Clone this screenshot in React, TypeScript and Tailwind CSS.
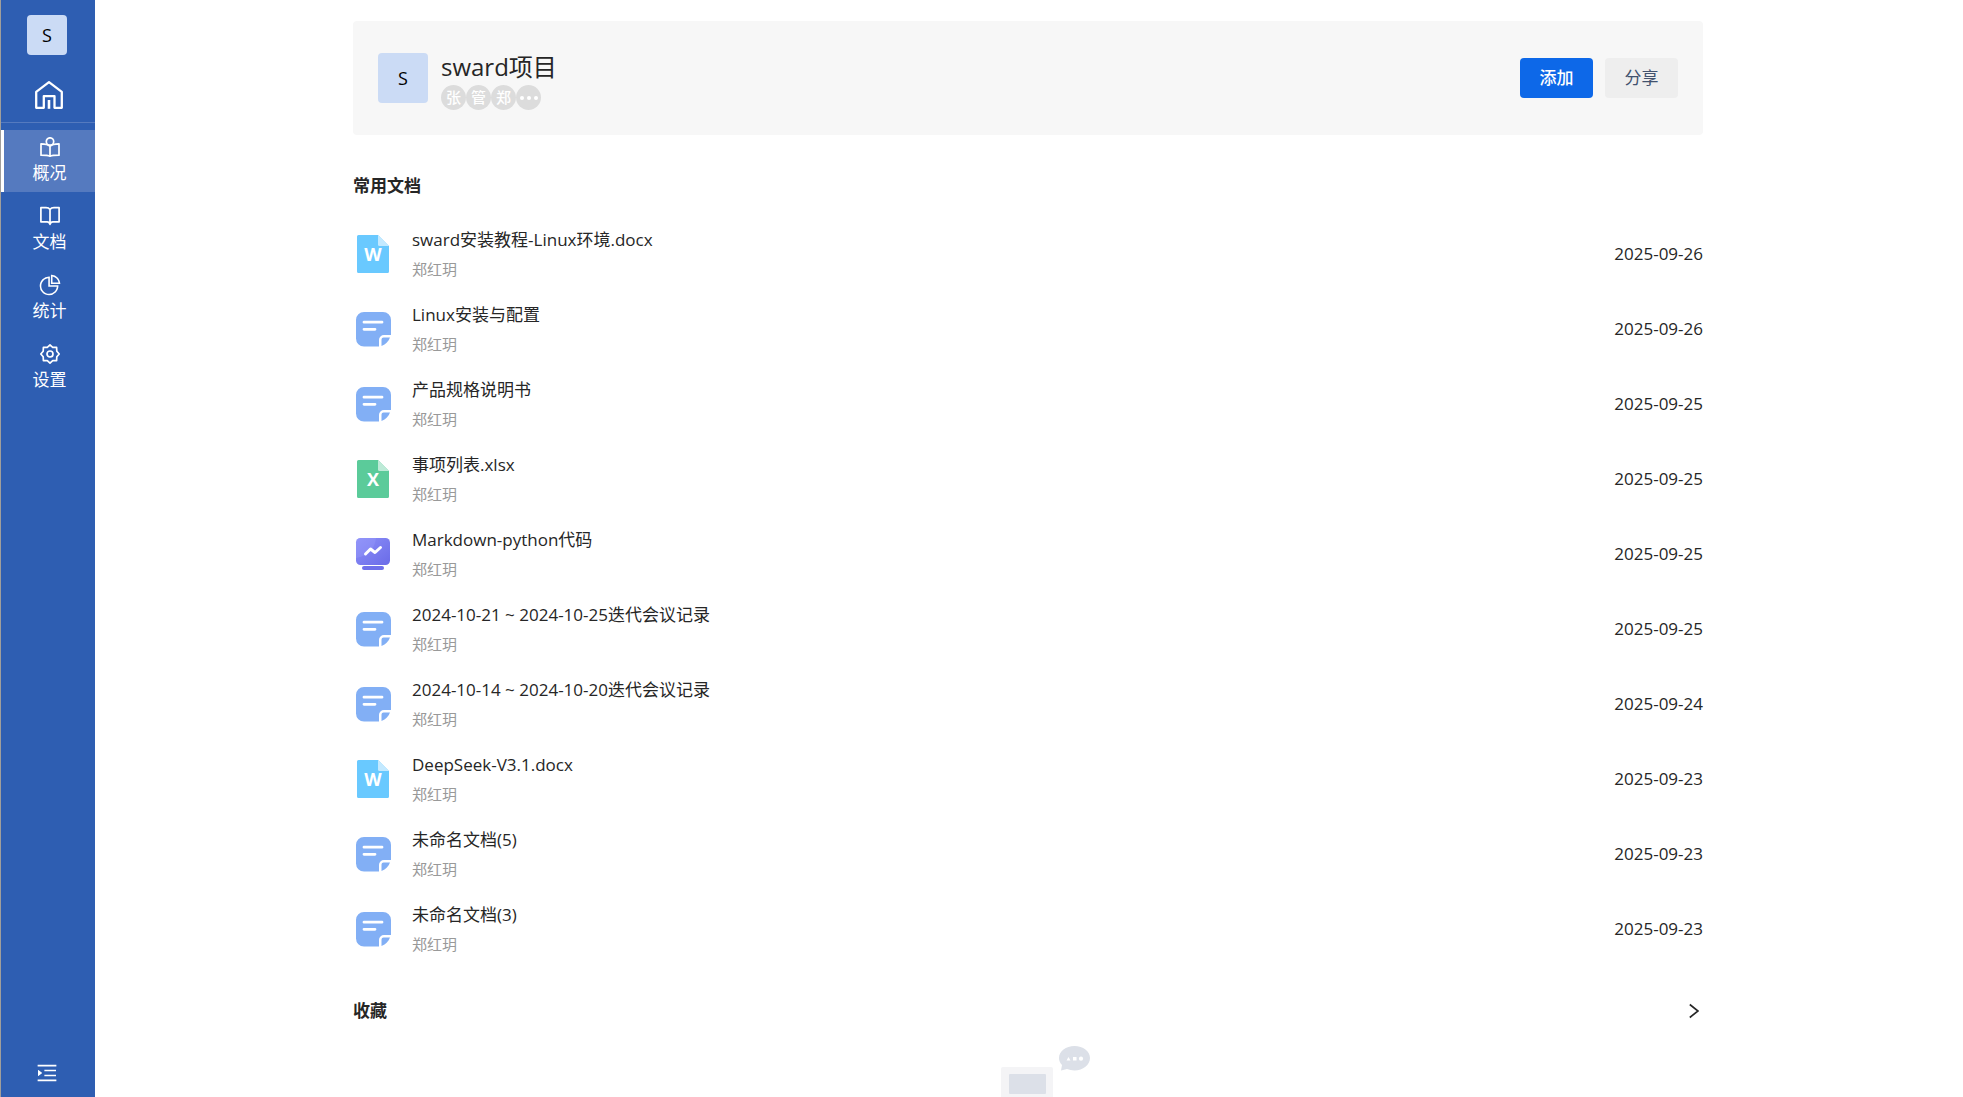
import type { ReactNode } from "react";
import { AiOutlinePieChart, AiOutlineMenuUnfold } from "react-icons/ai";

type DocKind = "word" | "excel" | "note" | "markdown";

const docs: { kind: DocKind; title: string; owner: string; date: string }[] = [
  { kind: "word", title: "sward安装教程-Linux环境.docx", owner: "郑红玥", date: "2025-09-26" },
  { kind: "note", title: "Linux安装与配置", owner: "郑红玥", date: "2025-09-26" },
  { kind: "note", title: "产品规格说明书", owner: "郑红玥", date: "2025-09-25" },
  { kind: "excel", title: "事项列表.xlsx", owner: "郑红玥", date: "2025-09-25" },
  { kind: "markdown", title: "Markdown-python代码", owner: "郑红玥", date: "2025-09-25" },
  { kind: "note", title: "2024-10-21 ~ 2024-10-25迭代会议记录", owner: "郑红玥", date: "2025-09-25" },
  { kind: "note", title: "2024-10-14 ~ 2024-10-20迭代会议记录", owner: "郑红玥", date: "2025-09-24" },
  { kind: "word", title: "DeepSeek-V3.1.docx", owner: "郑红玥", date: "2025-09-23" },
  { kind: "note", title: "未命名文档(5)", owner: "郑红玥", date: "2025-09-23" },
  { kind: "note", title: "未命名文档(3)", owner: "郑红玥", date: "2025-09-23" },
];

function HomeIcon() {
  return (
    <svg viewBox="0 0 28 28" className="size-7" fill="none" stroke="currentColor" strokeWidth="2.300" strokeLinejoin="round" aria-hidden="true">
      <path d="M1.200 26.800V10.800L14 1.200l12.800 9.600v16H19.500V15.200H8.800v11.600z" />
      <path d="M14 19v8.800" strokeWidth="2.600" />
    </svg>
  );
}

function OverviewIcon() {
  return (
    <svg viewBox="0 0 20 20" className="size-5" fill="none" stroke="currentColor" strokeWidth="1.700" strokeLinejoin="round" aria-hidden="true">
      <circle cx="10" cy="4.500" r="3.700" />
      <path d="M10 9.300C8.500 7.800 6.500 7 1 6.900v11.300c5 0 7.500.3 9 1.100 1.500-.8 4-1.100 9-1.100V6.900c-5.500.1-7.500.9-9 2.400zm0 0v10" />
    </svg>
  );
}

function BookIcon() {
  return (
    <svg viewBox="0 0 20 20" className="size-5" fill="none" stroke="currentColor" strokeWidth="1.700" strokeLinejoin="round" aria-hidden="true">
      <path d="M10 3.500C9 2 7.500 1.700 6 1.700H.9v14.100h6.300c1.500 0 2.300.7 2.800 2.600.5-1.900 1.300-2.600 2.800-2.600h6.300V1.700H14c-1.500 0-3 .3-4 1.800zm0 0v14.500" />
    </svg>
  );
}

function GearIcon() {
  return (
    <svg viewBox="0 0 20 20" className="size-5" fill="none" stroke="currentColor" strokeWidth="1.700" strokeLinejoin="round" aria-hidden="true">
      <path d="M10 .9l2.700 2.400h3.900l.2 3.900L19.200 10l-2.400 2.800-.2 3.900h-3.900L10 19.100l-2.700-2.400H3.400l-.2-3.900L.8 10l2.400-2.800.2-3.900h3.900z" />
      <circle cx="10" cy="10" r="3" />
    </svg>
  );
}

function SheetIcon({ letter, body, fold }: { letter: string; body: string; fold: string }) {
  return (
    <svg viewBox="0 0 40 40" className="size-10" aria-hidden="true">
      <path d="M5.500 1H25l11 11v25.500A1.500 1.500 0 0 1 34.500 39h-29A1.500 1.500 0 0 1 4 37.500v-35A1.500 1.500 0 0 1 5.500 1z" fill={body} />
      <path d="M25 1l11 11H26.500a1.500 1.500 0 0 1-1.500-1.500z" fill={fold} />
      <text x="20" y="27" textAnchor="middle" fontSize="18" fontWeight="700" fill="#fff">
        {letter}
      </text>
    </svg>
  );
}

function NoteIcon() {
  return (
    <svg viewBox="0 0 40 40" className="size-10" aria-hidden="true">
      <path d="M11 3h19a8 8 0 0 1 8 8v15h-7a5 5 0 0 0-5 5v6.500H11a8 8 0 0 1-8-8V11a8 8 0 0 1 8-8z" fill="#82aff5" />
      <path d="M30.500 28.500H37c-1.500 4-4 6.800-8.500 8.500v-6.500a2 2 0 0 1 2-2z" fill="#82aff5" />
      <path d="M11 13.200h18M11 20.300h11" stroke="#fff" strokeWidth="2.800" strokeLinecap="round" />
    </svg>
  );
}

function MarkdownIcon() {
  return (
    <svg viewBox="0 0 40 40" className="size-10" aria-hidden="true">
      <defs>
        <linearGradient id="screen" x1="0" y1="0" x2="1" y2="1">
          <stop offset="0" stopColor="#8d90f8" />
          <stop offset="1" stopColor="#6a6be8" />
        </linearGradient>
      </defs>
      <rect x="3" y="4" width="34" height="27" rx="4.500" fill="url(#screen)" />
      <path d="M7.500 4h15.500C22 15 15 22 3 24V8.500A4.500 4.500 0 0 1 7.500 4z" fill="#9a9dfb" opacity=".35" />
      <path d="M12.500 20l5-5 4.500 3.500 5.500-5" fill="none" stroke="#fff" strokeWidth="3" strokeLinecap="round" strokeLinejoin="round" />
      <rect x="9" y="32" width="22" height="4" rx="2" fill="#6f70ea" />
    </svg>
  );
}

function DocIcon({ kind }: { kind: DocKind }) {
  if (kind === "word") return <SheetIcon letter="W" body="#69c9ff" fold="#c3e9ff" />;
  if (kind === "excel") return <SheetIcon letter="X" body="#5bcb9a" fold="#bdead7" />;
  if (kind === "markdown") return <MarkdownIcon />;
  return <NoteIcon />;
}

function NavItem({ icon, label, active = false }: { icon: ReactNode; label: string; active?: boolean }) {
  return (
    <a
      href="#"
      aria-current={active ? "page" : undefined}
      className={
        "flex flex-col items-center gap-1 border-l-3 pt-[7px] pb-[7px] text-[17px] leading-6 " +
        (active ? "border-white bg-[#557abf]" : "border-transparent")
      }
    >
      {icon}
      <span>{label}</span>
    </a>
  );
}

function Sidebar() {
  return (
    <aside className="flex w-[95px] shrink-0 flex-col border-l border-[#a09e9b] bg-[#2e5eb2] text-white">
      <button type="button" className="mt-[15px] mr-0.5 size-10 self-center rounded bg-[#cbdbf5] text-lg text-black">
        S
      </button>
      <a href="#" aria-label="首页" className="mt-[26px] mb-[13px] ml-0.5 self-center">
        <HomeIcon />
      </a>
      <nav className="flex flex-col gap-[7px] border-t border-[#557abf] pt-[7px]">
        <NavItem icon={<OverviewIcon />} label="概况" active />
        <NavItem icon={<BookIcon />} label="文档" />
        <NavItem icon={<AiOutlinePieChart className="size-6 -my-0.5" />} label="统计" />
        <NavItem icon={<GearIcon />} label="设置" />
      </nav>
      <button type="button" aria-label="展开菜单" className="mt-auto mb-3 mr-0.5 self-center">
        <AiOutlineMenuUnfold className="size-6" />
      </button>
    </aside>
  );
}

function MemberDot({ children }: { children: ReactNode }) {
  return (
    <span className="flex size-[25px] items-center justify-center rounded-full bg-[#dcdcdc] text-[15px] leading-none font-medium text-white">
      {children}
    </span>
  );
}

function ProjectHeader() {
  return (
    <header className="flex items-center rounded bg-[#f7f7f7] px-[25px] pt-6 pb-[25px]">
      <div className="flex size-[50px] items-center justify-center rounded bg-[#cbdbf5] text-lg text-black">S</div>
      <div className="ml-[13px]">
        <h1 className="pt-1 text-2xl leading-9">sward项目</h1>
        <div className="flex">
          <MemberDot>张</MemberDot>
          <MemberDot>管</MemberDot>
          <MemberDot>郑</MemberDot>
          <MemberDot>
            <svg viewBox="0 0 20 6" className="h-1.5 w-5" fill="currentColor" aria-label="更多成员">
              <circle cx="3" cy="3" r="2" />
              <circle cx="10" cy="3" r="2" />
              <circle cx="17" cy="3" r="2" />
            </svg>
          </MemberDot>
        </div>
      </div>
      <div className="ml-auto flex gap-3">
        <button type="button" className="h-10 w-[73px] rounded bg-[#0d68e8] text-[17px] font-medium text-white">
          添加
        </button>
        <button type="button" className="h-10 w-[73px] rounded bg-[#eeeeee] text-[17px] text-[#42526e]">
          分享
        </button>
      </div>
    </header>
  );
}

function EmptyArt() {
  return (
    <svg viewBox="0 0 160 60" className="mx-auto h-[60px] w-40" aria-hidden="true">
      <rect x="53" y="27" width="52" height="40" rx="2" fill="#f4f4f6" />
      <rect x="61" y="34" width="37" height="20" rx="1" fill="#dce0e8" />
      <path d="M126.500 6c8.600 0 15.500 5.300 15.500 12s-6.900 12.500-15.500 12.500c-2.700 0-5.200-.5-7.500-1.400l-6 1.400 1-5.500c-1.900-2-3-4.400-3-7 0-6.700 6.900-12 15.500-12z" fill="#dce0e8" />
      <path d="M118.500 20.500l2-3.500 2 3.500zM125 17h3.500v3.500H125z" fill="#fff" />
      <circle cx="133" cy="18.700" r="2.100" fill="#fff" />
    </svg>
  );
}

export default function App() {
  return (
    <div className="flex h-screen overflow-hidden bg-white font-['Open_Sans','Noto_Sans_CJK_SC',sans-serif] text-[#262626]">
      <Sidebar />
      <main className="min-w-0 flex-1 overflow-hidden pt-[21px] pr-0.5">
        <div className="mx-auto max-w-[1350px]">
          <ProjectHeader />
          <section>
            <h2 className="mt-[39px] text-[17px] leading-6 font-bold">常用文档</h2>
            <ul className="mt-[18px]">
              {docs.map((doc) => (
                <li key={doc.title} className="flex h-[75px] items-center">
                  <DocIcon kind={doc.kind} />
                  <div className="ml-[19px] min-w-0 flex-1">
                    <a href="#" className="block truncate text-[17px] leading-[30px]">
                      {doc.title}
                    </a>
                    <div className="text-[15px] leading-7 text-[#999999]">{doc.owner}</div>
                  </div>
                  <time className="pt-px text-[17px]">{doc.date}</time>
                </li>
              ))}
            </ul>
          </section>
          <section>
            <div className="mt-[33px] flex items-center justify-between">
              <h2 className="text-[17px] leading-6 font-bold">收藏</h2>
              <button type="button" aria-label="展开收藏" className="pr-1">
                <svg viewBox="0 0 10 16" className="h-4 w-2.5" fill="none" stroke="#262626" strokeWidth="1.600" aria-hidden="true">
                  <path d="M.8 1.500L9 8 .8 14.500" />
                </svg>
              </button>
            </div>
            <div className="mt-[17px]">
              <EmptyArt />
            </div>
          </section>
        </div>
      </main>
    </div>
  );
}
